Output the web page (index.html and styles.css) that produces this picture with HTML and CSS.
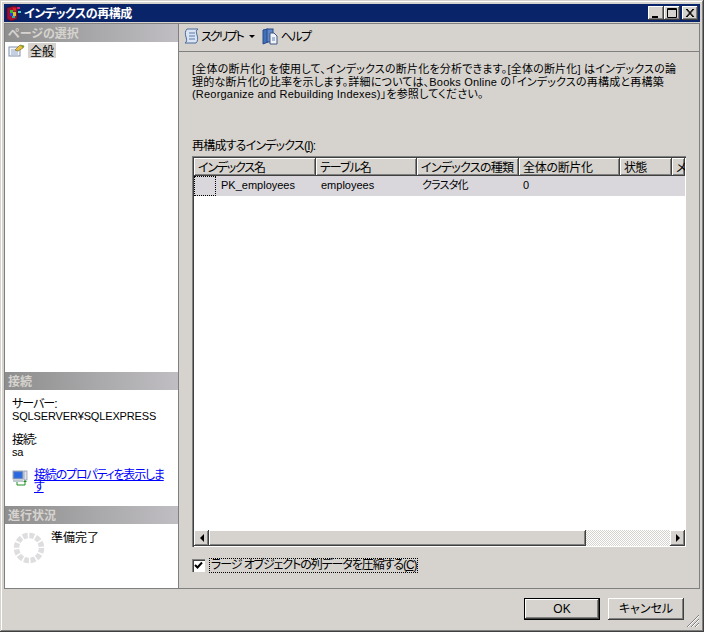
FILE: index.html
```html
<!DOCTYPE html>
<html lang="ja">
<head>
<meta charset="utf-8">
<title>インデックスの再構成</title>
<link rel="stylesheet" href="styles.css">
</head>
<body>
<div class="window">
  <div class="titlebar">
    <svg class="app-icon" width="16" height="16" viewBox="0 0 16 16"><path d="M1 3l7-2 3 1v12l-6 2-4-2z" fill="#a01030" stroke="#500818" stroke-width=".6"/><rect x="4" y="5" width="3" height="3" fill="#20c040"/><rect x="7" y="3" width="3" height="3" fill="#e02020"/><rect x="4" y="8" width="3" height="3" fill="#2040e0"/><rect x="7" y="7" width="3" height="4" fill="#e0c020"/><rect x="6" y="11" width="3" height="2" fill="#20b0b0"/><rect x="11" y="2" width="3" height="2" fill="#d02080"/><rect x="12" y="6" width="3" height="2" fill="#40d0d0"/></svg>
    <span class="title">インデックスの再構成</span>
    <div class="winbtns">
      <div class="winbtn"><svg width="14" height="12" viewBox="0 0 14 12"><rect x="3" y="9" width="6" height="2" fill="#000"/></svg></div>
      <div class="winbtn"><svg width="14" height="12" viewBox="0 0 14 12"><path d="M2.5 1.5h9v9h-9z M2 2.5h10" fill="none" stroke="#000"/></svg></div>
      <div class="winbtn close"><svg width="14" height="12" viewBox="0 0 14 12"><path d="M3 2l7 8M4 2l7 8M10 2l-7 8M11 2l-7 8" stroke="#000" fill="none"/></svg></div>
    </div>
  </div>
  <div class="main">
    <aside class="side">
      <div class="sec-head">ページの選択</div>
      <div class="sec-pages">
        <div class="page-item">
          <svg width="17" height="14" viewBox="0 0 17 14"><rect x="1" y="4" width="11" height="9" fill="#f6f6f6" stroke="#8090b0"/><path d="M3 7h7M3 9h7M3 11h7" stroke="#90a8d0"/><path d="M7 7l5-5 4 1-1 2-5 3z" fill="#e8c040" stroke="#806010" stroke-width=".6"/><path d="M12 2l4 1-1 2z" fill="#70a030"/></svg>
          <span class="page-label">全般</span>
        </div>
      </div>
      <div class="sec-head">接続</div>
      <div class="sec-conn">
        <div class="kv"><span class="cjk">サーバー:</span><br>SQLSERVER¥SQLEXPRESS</div>
        <div class="kv"><span class="cjk">接続:</span><br>sa</div>
        <div class="conn-link">
          <svg width="16" height="16" viewBox="0 0 16 16"><rect x="1" y="1" width="10" height="8" fill="#4070d0" stroke="#a0a8b0"/><rect x="2.500" y="2.500" width="7" height="5" fill="#2868e0"/><rect x="1" y="10" width="10" height="2" fill="#c0c8d0"/><rect x="12" y="1" width="3" height="9" fill="#e0e4ec" stroke="#8090a8" stroke-width=".7"/><path d="M5 12v3h8v-4" stroke="#209020" fill="none"/><path d="M11 12l2-2 2 2z" fill="#209020"/></svg>
          <a href="#">接続のプロパティを表示します</a>
        </div>
      </div>
      <div class="sec-head">進行状況</div>
      <div class="sec-prog">
        <svg class="spinner" width="32" height="32" viewBox="0 0 32 32"><circle cx="16" cy="16" r="12.5" fill="none" stroke="#dedee0" stroke-width="5.5" stroke-dasharray="4.9 1.64"/></svg>
        <span>準備完了</span>
      </div>
    </aside>
    <section class="content">
      <div class="toolbar">
        <svg width="17" height="17" viewBox="0 0 17 17"><path d="M4 1h11c-2 1-2 3-1 6s1 6-1 8H2c2-1 2-3 1-6S2 3 4 1z" fill="#dbe4f2" stroke="#4a6a9c"/><path d="M6 5h6M6 8h6M6 11h6" stroke="#5a78a8"/></svg>
        <span class="tb-text">スクリプト</span>
        <span class="tb-arrow"></span>
        <svg class="help-icon" width="17" height="17" viewBox="0 0 17 17"><path d="M1 2l5-1v13l-5 2z" fill="#4070b8" stroke="#28488c"/><rect x="5" y="1" width="6" height="13" fill="#6088c8" stroke="#28488c"/><path d="M8 5h4l3 3v8H8z" fill="#f0f4fa" stroke="#405880"/><path d="M10 10h3M10 12h3" stroke="#6080b0"/></svg>
        <span class="tb-text help">ヘルプ</span>
      </div>
      <div class="body">
        <p class="desc"><span>[全体の断片化] を使用して、インデックスの断片化を分析できます。[全体の断片化] はインデックスの論</span><span>理的な断片化の比率を示します。詳細については、Books Online の「インデックスの再構成と再構築</span><span>(Reorganize and Rebuilding Indexes)」を参照してください。</span></p>
        <div class="list-label">再構成するインデックス(<u>I</u>):</div>
        <div class="grid">
          <div class="grid-inner">
            <div class="ghead">
              <div class="gh w1">インデックス名</div>
              <div class="gh w2">テーブル名</div>
              <div class="gh w3">インデックスの種類</div>
              <div class="gh w4">全体の断片化</div>
              <div class="gh w5">状態</div>
              <div class="gh w6">メ</div>
            </div>
            <div class="grow">
              <div class="gc c0"></div>
              <div class="gc c1">PK_employees</div>
              <div class="gc c2">employees</div>
              <div class="gc c3">クラスタ化</div>
              <div class="gc c4">0</div>
            </div>
            <div class="gfill"></div>
            <div class="hscroll">
              <div class="sbtn"><span class="arr-l"></span></div>
              <div class="thumb"></div>
              <div class="track"></div>
              <div class="sbtn"><span class="arr-r"></span></div>
            </div>
          </div>
        </div>
        <div class="check-row">
          <span class="check"><svg width="9" height="9" viewBox="0 0 9 9"><path d="M1 4l2.500 2.500L8 1.500" fill="none" stroke="#000" stroke-width="2"/></svg></span>
          <span class="check-label">ラージ オブジェクトの列データを圧縮する(<u>C</u>)</span>
        </div>
      </div>
    </section>
  </div>
  <div class="footer">
    <button class="btn default">OK</button>
    <button class="btn">キャンセル</button>
    <svg class="grip" width="14" height="14" viewBox="0 0 14 14"><path d="M13 1L1 13M13 5L5 13M13 9L9 13" stroke="#808080" fill="none"/><path d="M13 2L2 13M13 6L6 13M13 10L10 13" stroke="#fff" fill="none"/></svg>
  </div>
</div>
</body>
</html>
```
FILE: styles.css
```css
* { box-sizing: border-box; }
html, body { margin: 0; padding: 0; }
body {
  width: 704px; height: 632px; overflow: hidden; background: #d6d3ce;
  font-family: "Liberation Sans", "Noto Sans CJK JP", sans-serif;
  font-size: 11px; line-height: 12px; color: #000;
  font-feature-settings: "palt";
}
.window {
  width: 704px; height: 632px; padding: 4px; display: flex; flex-direction: column;
  background: #d6d3ce;
  box-shadow: inset -1px -1px 0 #404040, inset 1px 1px 0 #d6d3ce, inset -2px -2px 0 #808080, inset 2px 2px 0 #fff;
}
.titlebar {
  height: 18px; background: #0a246a; display: flex; align-items: center; padding-left: 2px; flex: none;
}
.app-icon { flex: none; }
.title {
  margin-left: 2px; color: #fff; font-weight: bold; font-size: 12px; letter-spacing: -.5px;
  font-family: "Noto Sans CJK JP", sans-serif;
}
.winbtns { margin-left: auto; margin-right: 2px; display: flex; }
.winbtn {
  width: 16px; height: 14px; background: #d6d3ce; display: flex; align-items: center; justify-content: center;
  box-shadow: inset -1px -1px 0 #404040, inset 1px 1px 0 #fff, inset -2px -2px 0 #808080;
}
.close { margin-left: 2px; }
.main {
  margin-top: 1px; height: 566px; flex: none; display: flex;
  border-top: 1px solid #808080; border-bottom: 1px solid #808080;
}
.side {
  width: 175px; flex: none; display: flex; flex-direction: column; background: #fff;
  border-left: 1px solid #808080; border-right: 1px solid #808080;
}
.sec-head {
  height: 18px; flex: none; padding: 1px 0 0 3px; color: #d6d3ce; font-weight: bold; font-size: 12px; line-height: 16px;
  background: linear-gradient(90deg, #8e8e8e, #c0bec2);
  font-family: "Noto Sans CJK JP", sans-serif;
}
.sec-pages { height: 330px; flex: none; padding: 0 0 0 3px; }
.page-item { display: flex; align-items: center; height: 16px; }
.page-label { margin-left: 3px; padding: 0 2px; background: #d6d3ce; font-size: 12px; line-height: 15px; font-family: "Noto Sans CJK JP", sans-serif; }
.sec-conn { height: 116px; flex: none; padding: 8px 0 0 7px; }
.kv { margin-bottom: 12px; white-space: nowrap; letter-spacing: -.15px; }
.cjk { font-size: 12px; letter-spacing: -1px; }
.conn-link { display: flex; gap: 6px; margin-top: -1px; }
.conn-link svg { flex: none; margin-top: 1px; }
.conn-link a { color: #0000ff; width: 132px; font-size: 12px; line-height: 12px; letter-spacing: -1.2px; }
.sec-prog { flex: 1; display: flex; padding: 7px 0 0 8px; font-size: 12px; }
.spinner { flex: none; margin: 1px 0 0 0; }
.sec-prog span { margin-left: 6px; font-family: "Noto Sans CJK JP", sans-serif; }
.content { flex: 1; min-width: 0; display: flex; flex-direction: column; }
.toolbar {
  height: 28px; flex: none; border-bottom: 1px solid #808080; border-right: 1px solid #808080; display: flex; align-items: center; padding: 0 0 3px 4px;
}
.tb-text { margin-left: 1px; font-size: 12px; letter-spacing: -2px; font-family: "Noto Sans CJK JP", sans-serif; }
.tb-text.help { margin-left: 2px; letter-spacing: -1.5px; }
.help-icon { margin-left: 7px; }
.tb-arrow {
  margin-left: 6px; width: 0; height: 0; border-left: 3px solid transparent; border-right: 3px solid transparent; border-top: 3px solid #000;
}
.body { flex: 1; min-height: 0; padding: 11px 13px 14px 13px; display: flex; flex-direction: column; border-right: 1px solid #808080; }
.desc { margin: 0; font-size: 11px; line-height: 12.500px; white-space: nowrap; letter-spacing: .2px; }
.desc span { display: block; }
.list-label { margin-top: 39px; font-size: 12px; line-height: 12px; letter-spacing: -.8px; }
.grid { margin-top: 4px; height: 391px; background: #fff; padding: 2px 1px 1px 2px; flex: none;
  box-shadow: inset 1px 1px 0 #808080, inset 2px 2px 0 #404040; }
.grid-inner { height: 100%; display: flex; flex-direction: column; overflow: hidden; }
.ghead { display: flex; height: 18px; flex: none; }
.gh {
  height: 18px; padding: 2px 0 0 4px; white-space: nowrap; font-size: 12px; line-height: 14px; letter-spacing: -.7px;
  background: #d6d3ce; font-family: "Noto Sans CJK JP", sans-serif;
  box-shadow: inset -1px -1px 0 #404040, inset 1px 1px 0 #fff, inset -2px -2px 0 #808080;
}
.w1 { width: 122px; letter-spacing: -1.2px; } .w2 { width: 101px; letter-spacing: -1px; } .w3 { width: 102px; } .w4 { width: 101px; letter-spacing: -.3px; } .w5 { width: 52px; } .w6 { flex: 1; min-width: 0; }
.grow { display: flex; height: 20px; flex: none; background: #d9d7dc; line-height: 18px; }
.gc { padding-left: 5px; white-space: nowrap; }
.c0 { width: 22px; padding: 0; border: 1px dotted #000; }
.c1 { width: 100px; } .c2 { width: 101px; } .c3 { width: 102px; font-size: 11px; letter-spacing: -.8px; } .c4 { width: 100px; padding-left: 4px; }
.gfill { flex: 1; }
.hscroll { height: 16px; flex: none; display: flex; background: #d6d3ce; }
.sbtn {
  width: 15px; height: 16px; flex: none; background: #d6d3ce; display: flex; align-items: center; justify-content: center;
  box-shadow: inset -1px -1px 0 #404040, inset 1px 1px 0 #fff, inset -2px -2px 0 #808080;
}
.arr-l, .arr-r { width: 0; height: 0; border-top: 4px solid transparent; border-bottom: 4px solid transparent; }
.arr-l { border-right: 4px solid #000; }
.arr-r { border-left: 4px solid #000; }
.thumb { width: 377px; flex: none; background: #d6d3ce; box-shadow: inset -1px -1px 0 #404040, inset 1px 1px 0 #fff, inset -2px -2px 0 #808080; }
.track { flex: 1; background: repeating-conic-gradient(#fff 0 25%, #d6d3ce 0 50%) 0 0 / 2px 2px; }
.check-row { margin-top: 11px; display: flex; align-items: center; height: 15px; }
.check {
  width: 13px; height: 13px; flex: none; background: #fff; display: flex; align-items: center; justify-content: center;
  box-shadow: inset 1px 1px 0 #808080, inset 2px 2px 0 #404040, inset -1px -1px 0 #fff;
}
.check-label { margin-left: 4px; padding: 0 1px; border: 1px dotted #000; font-size: 12px; line-height: 13px; white-space: nowrap; letter-spacing: -1.1px; }
.footer { flex: 1; position: relative; display: flex; justify-content: flex-end; gap: 8px; padding: 9px 16px 0 0; }
.btn {
  width: 76px; height: 22px; padding: 0; background: #d6d3ce; border: 0; color: #000; border-radius: 0;
  font-family: "Liberation Sans", "Noto Sans CJK JP", sans-serif; font-size: 12px; line-height: 12px; font-feature-settings: "palt";
  box-shadow: inset -1px -1px 0 #404040, inset 1px 1px 0 #fff, inset -2px -2px 0 #808080;
}
.btn.default { box-shadow: inset 0 0 0 1px #000, inset -2px -2px 0 #404040, inset 2px 2px 0 #fff, inset -3px -3px 0 #808080; }
.grip { position: absolute; right: 0; bottom: 0; }
```
